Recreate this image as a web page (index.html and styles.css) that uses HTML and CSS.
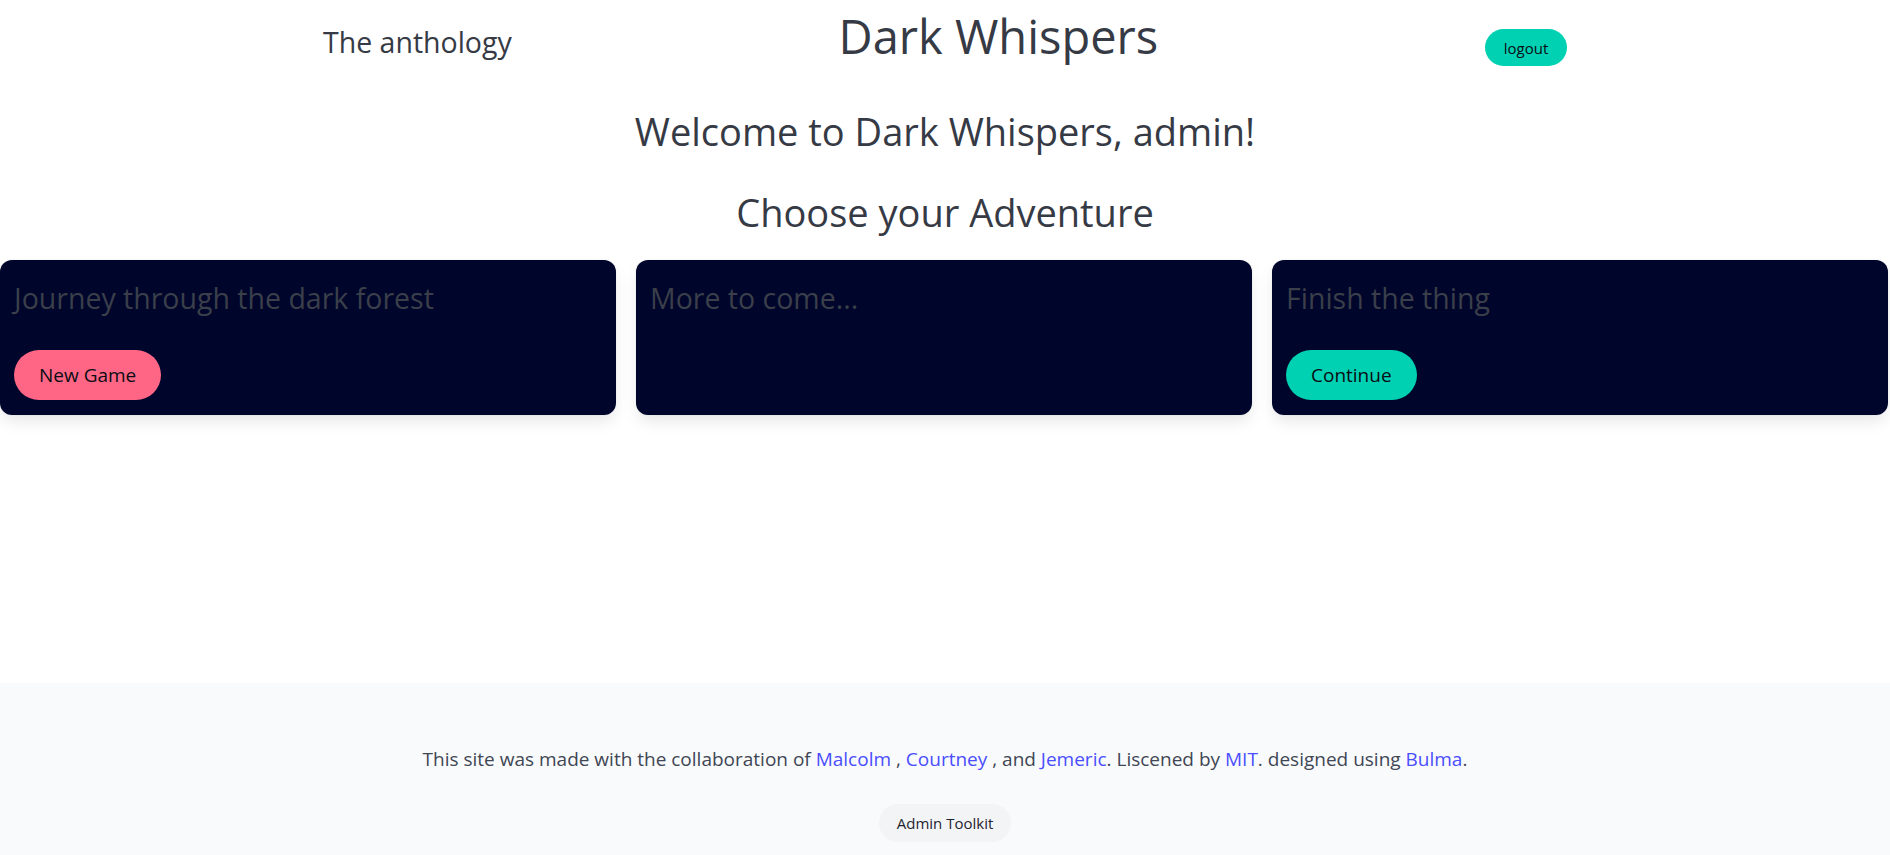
FILE: index.html
```html
<!DOCTYPE html>
<html lang="en">
<head>
<meta charset="utf-8">
<title>Dark Whispers</title>
<link rel="stylesheet" href="styles.css">
</head>
<body>
<div class="page">
  <header class="topbar">
    <p class="anthology">The anthology</p>
    <h1 class="brand">Dark Whispers</h1>
    <button class="btn btn-logout">logout</button>
  </header>

  <main class="main">
    <h2 class="welcome">Welcome to Dark Whispers, admin!</h2>
    <h2 class="choose">Choose your Adventure</h2>

    <div class="cards">
      <div class="card">
        <p class="card-title">Journey through the dark forest</p>
        <button class="btn btn-medium btn-danger">New Game</button>
      </div>
      <div class="card">
        <p class="card-title">More to come...</p>
      </div>
      <div class="card">
        <p class="card-title">Finish the thing</p>
        <button class="btn btn-medium btn-primary">Continue</button>
      </div>
    </div>
  </main>

  <footer class="footer">
    <p class="credits">This site was made with the collaboration of <a href="#">Malcolm</a> , <a href="#">Courtney</a> , and <a href="#">Jemeric</a>. Liscened by <a href="#">MIT</a>. designed using <a href="#">Bulma</a>.</p>
    <button class="btn btn-light">Admin Toolkit</button>
  </footer>
</div>
</body>
</html>
```

FILE: styles.css
```css
* { box-sizing: border-box; }
html, body { margin: 0; padding: 0; }
body {
  font-family: "Open Sans", "Noto Sans", sans-serif;
  color: #3f4654;
  background: #fff;
  font-size: 16px;
}
.page { display: flex; flex-direction: column; min-height: 855px; }

.topbar {
  width: 1344px;
  margin: 0 auto;
  padding: 9px 50px 0 50px;
  display: flex;
  justify-content: space-between;
  align-items: flex-start;
  height: 80px;
}
.anthology {
  margin: 16px 0 0 0;
  font-size: 28.5px;
  line-height: 34px;
  color: #363a45;
}
.brand {
  margin: 0;
  font-size: 47px;
  font-weight: 400;
  line-height: 54px;
  color: #363a45;
}
.btn {
  font-family: inherit;
  border: none;
  border-radius: 9999px;
  cursor: pointer;
  color: #0a0d14;
}
.btn-logout {
  margin-top: 20px;
  height: 37px;
  width: 82px;
  font-size: 15px;
  background: #00d1b2;
  padding: 0;
}
.main { flex: 1 0 auto; min-height: 603px; }
.welcome {
  margin: 28px 0 0 0;
  text-align: center;
  font-size: 38px;
  font-weight: 400;
  line-height: 46px;
  color: #363a45;
}
.choose {
  margin: 36px 0 0 0;
  text-align: center;
  font-size: 38px;
  font-weight: 400;
  line-height: 44px;
  color: #363a45;
}
.cards {
  display: grid;
  grid-template-columns: repeat(3, 1fr);
  gap: 20px;
  margin: 26px 2px 0 0;
}
.card {
  background: #00052b;
  border-radius: 12px;
  padding: 22px 14px 14px 14px;
  min-height: 155px;
  box-shadow: 0 8px 16px -2px rgba(10, 10, 10, 0.1), 0 0 0 1px rgba(10, 10, 10, 0.02);
}
.card-title {
  margin: 0 0 36px 0;
  font-size: 28.5px;
  line-height: 32px;
  color: #3a3f4a;
}
.btn-medium {
  height: 50px;
  font-size: 19px;
  font-weight: 500;
  padding: 0 25px;
}
.btn-danger { background: #ff6685; }
.btn-primary { background: #00d1b2; }

.footer {
  background: #f9fafb;
  padding: 62px 24px 14px;
  text-align: center;
  height: 172px;
}
.credits {
  margin: 0;
  font-size: 19px;
  line-height: 28px;
  color: #3f4654;
}
.credits a { color: #4a4eff; text-decoration: none; }
.btn-light {
  margin-top: 31px;
  height: 38px;
  padding: 0 18px;
  font-size: 15px;
  background: #f3f4f6;
  color: #1f2430;
}
```
